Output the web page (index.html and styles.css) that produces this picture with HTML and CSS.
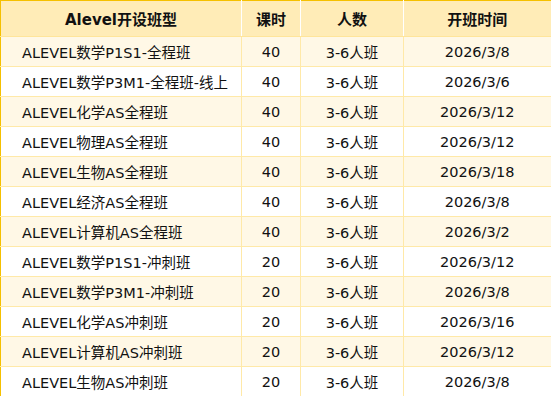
FILE: index.html
```html
<!DOCTYPE html>
<html lang="zh-CN">
<head>
<meta charset="utf-8">
<link rel="stylesheet" href="styles.css">
</head>
<body>
<table class="schedule">
  <colgroup>
    <col class="c-name">
    <col class="c-hours">
    <col class="c-size">
    <col class="c-date">
  </colgroup>
  <thead>
    <tr><th>Alevel开设班型</th><th>课时</th><th>人数</th><th>开班时间</th></tr>
  </thead>
  <tbody>
    <tr><td class="name">ALEVEL数学P1S1-全程班</td><td>40</td><td>3-6人班</td><td>2026/3/8</td></tr>
    <tr><td class="name">ALEVEL数学P3M1-全程班-线上</td><td>40</td><td>3-6人班</td><td>2026/3/6</td></tr>
    <tr><td class="name">ALEVEL化学AS全程班</td><td>40</td><td>3-6人班</td><td>2026/3/12</td></tr>
    <tr><td class="name">ALEVEL物理AS全程班</td><td>40</td><td>3-6人班</td><td>2026/3/12</td></tr>
    <tr><td class="name">ALEVEL生物AS全程班</td><td>40</td><td>3-6人班</td><td>2026/3/18</td></tr>
    <tr><td class="name">ALEVEL经济AS全程班</td><td>40</td><td>3-6人班</td><td>2026/3/8</td></tr>
    <tr><td class="name">ALEVEL计算机AS全程班</td><td>40</td><td>3-6人班</td><td>2026/3/2</td></tr>
    <tr><td class="name">ALEVEL数学P1S1-冲刺班</td><td>20</td><td>3-6人班</td><td>2026/3/12</td></tr>
    <tr><td class="name">ALEVEL数学P3M1-冲刺班</td><td>20</td><td>3-6人班</td><td>2026/3/8</td></tr>
    <tr><td class="name">ALEVEL化学AS冲刺班</td><td>20</td><td>3-6人班</td><td>2026/3/16</td></tr>
    <tr><td class="name">ALEVEL计算机AS冲刺班</td><td>20</td><td>3-6人班</td><td>2026/3/12</td></tr>
    <tr><td class="name">ALEVEL生物AS冲刺班</td><td>20</td><td>3-6人班</td><td>2026/3/8</td></tr>
  </tbody>
</table>
</body>
</html>
```
FILE: styles.css
```css
html, body {
  margin: 0;
  padding: 0;
  background: #ffffff;
}
.schedule {
  width: 551px;
  border-collapse: collapse;
  table-layout: fixed;
  font-family: "DejaVu Sans", "Noto Sans CJK SC", sans-serif;
  font-size: 14.5px;
  color: #111111;
  border-top: 1px solid #f5c000;
  border-left: 1px solid #f5c000;
  border-right: 2px solid #f5c000;
}
.c-name { width: 241px; }
.c-hours { width: 59px; }
.c-size { width: 103px; }
.c-date { width: 148px; }
.schedule th {
  height: 35px;
  padding: 0;
  background: #ffecb7;
  font-weight: bold;
  font-size: 15px;
  text-align: center;
  border-left: 1px solid #ffffff;
  border-bottom: 1px solid #ffe59a;
}
.schedule th:first-child { border-left-color: #f5c000; }
.schedule td {
  height: 29px;
  padding: 0;
  text-align: center;
  border: 1px solid #ffe9a8;
}
.schedule td:first-child { border-left-color: #f5c000; }
.schedule td:last-child { border-right-color: #f5c000; }
.schedule tbody tr:nth-child(odd) td { background: #fff8e6; }
.schedule td.name {
  text-align: left;
  padding-left: 21px;
}
```
